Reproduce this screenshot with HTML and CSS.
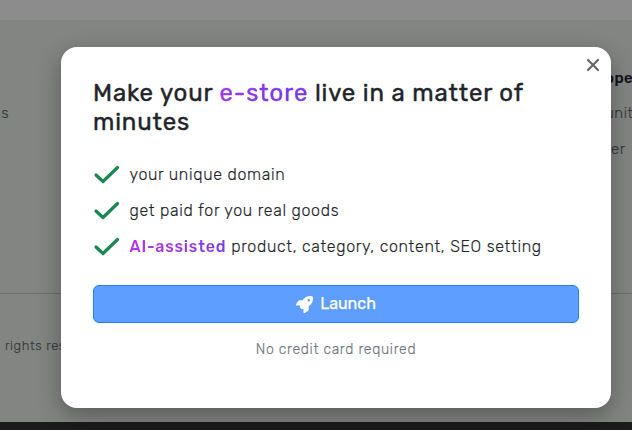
FILE: index.html
```html
<!DOCTYPE html>
<html lang="en">
<head>
<meta charset="utf-8">
<title>Launch your e-store</title>
<link rel="stylesheet" href="styles.css">
</head>
<body>
<div class="page">
  <div class="top-band"></div>
  <section class="links">
    <div class="left-links"><span class="blue">n</span>s</div>
    <div class="right-links">
      <strong>oper</strong>
      <span>unity</span>
      <span class="indent">er</span>
    </div>
  </section>
  <footer class="footer">rights reserved</footer>
  <div class="bottom-bar"></div>
</div>
<div class="modal">
  <button class="close" aria-label="Close"><svg width="14" height="14" viewBox="0 0 14 14"><path d="M2 2L12 12M12 2L2 12"/></svg></button>
  <h1 class="title"><span class="line">Make your <span class="grad heading-grad">e-store</span> live in a matter of</span> <span class="line">minutes</span></h1>
  <ul class="features">
    <li><svg class="check" width="27" height="20" viewBox="0 0 27 20"><path d="M3 11L10 17.5L24.5 3.5"/></svg><span>your unique domain</span></li>
    <li><svg class="check" width="27" height="20" viewBox="0 0 27 20"><path d="M3 11L10 17.5L24.5 3.5"/></svg><span>get paid for you real goods</span></li>
    <li><svg class="check" width="27" height="20" viewBox="0 0 27 20"><path d="M3 11L10 17.5L24.5 3.5"/></svg><span><b class="grad">AI-assisted</b> product, category, content, SEO setting</span></li>
  </ul>
  <button class="launch"><svg width="17" height="17" viewBox="0 0 512 512"><path d="M156.6 384.9L125.7 354c-8.5-8.5-11.5-20.8-7.7-32.2c3-8.9 7-20.5 11.8-33.8L24 288c-8.6 0-16.6-4.6-20.9-12.1s-4.2-16.7 .2-24.1l52.5-88.5c13-21.9 36.5-35.3 61.9-35.3l82.3 0c2.4-4 4.8-7.7 7.2-11.3C289.1-4.1 411.1-8.1 483.9 5.3c11.6 2.1 20.6 11.2 22.8 22.8c13.4 72.9 9.3 194.8-111.4 276.7c-3.5 2.4-7.3 4.8-11.3 7.2v82.3c0 25.4-13.4 49-35.3 61.9l-88.5 52.5c-7.4 4.4-16.6 4.5-24.1 .2s-12.1-12.2-12.1-20.9V380.8c-14.1 4.9-26.4 8.9-35.7 11.9c-11.2 3.6-23.4 .5-31.8-7.8zM384 168a40 40 0 1 0 0-80 40 40 0 1 0 0 80z"/></svg><span>Launch</span></button>
  <p class="note">No credit card required</p>
</div>
</body>
</html>
```
FILE: styles.css
```css
* { box-sizing: border-box; }
body {
  margin: 0;
  font-family: Rubik, Roboto, sans-serif;
  color: #212529;
}
.page {
  width: 632px;
  height: 430px;
  overflow: hidden;
  display: flex;
  flex-direction: column;
  background: #838583;
  color: #34383c;
  font-size: 15px;
  font-weight: 300;
  -webkit-text-stroke: 0.15px;
}
.top-band { height: 20px; background: #8c8c8c; }
.links {
  height: 274px;
  padding-top: 49px;
  display: flex;
  justify-content: space-between;
  border-bottom: 1px solid #6c6e6d;
}
.left-links { width: 60px; margin-left: -8px; padding-top: 35px; line-height: 18px; letter-spacing: 0.5px; }
.blue { color: #24507f; }
.right-links {
  width: 27px;
  display: flex;
  flex-direction: column;
  gap: 17.4px;
  line-height: 18px;
  white-space: nowrap;
  letter-spacing: 0.5px;
}
.right-links strong { color: #111316; font-weight: 500; }
.indent { padding-left: 6px; }
.footer {
  flex: 1;
  padding: 43px 0 0 5px;
  font-size: 13px;
  line-height: 18px;
  letter-spacing: 0.6px;
}
.bottom-bar { height: 8px; background: #1b1b1b; }
.modal {
  position: absolute;
  left: 61px;
  top: 47px;
  width: 550px;
  height: 361px;
  padding: 32px;
  border-radius: 16px;
  background: #fff;
  box-shadow: 0 8px 24px rgba(0, 0, 0, 0.32);
}
.close {
  position: absolute;
  top: 11px;
  right: 11px;
  padding: 0;
  border: 0;
  background: none;
  line-height: 0;
}
.close path { fill: none; stroke: #666; stroke-width: 2.2; stroke-linecap: round; }
.title {
  margin: 0;
  font-size: 24px;
  font-weight: 400;
  line-height: 29px;
  letter-spacing: 0.83px;
  -webkit-text-stroke: 0.4px;
}
.line { display: block; white-space: nowrap; }
.grad {
  background: linear-gradient(90deg, #b832e6, #7c3aed);
  -webkit-background-clip: text;
  background-clip: text;
  color: transparent;
}
.features b { font-weight: 500; -webkit-text-stroke: 0; letter-spacing: 0.8px; }
.heading-grad { background-image: linear-gradient(90deg, #9b36ea, #7038eb); }
.features {
  list-style: none;
  margin: 19px 0 0;
  padding: 0;
}
.features li {
  height: 36px;
  display: flex;
  align-items: center;
  gap: 9.5px;
  font-size: 16px;
  font-weight: 300;
  letter-spacing: 0.69px;
  white-space: nowrap;
  color: #212529;
  -webkit-text-stroke: 0.15px;
}
.check { flex: none; }
.check path {
  fill: none;
  stroke: #198754;
  stroke-width: 3.2;
  stroke-linecap: round;
  stroke-linejoin: round;
}
.launch {
  width: 100%;
  height: 38px;
  margin-top: 21px;
  padding: 0;
  display: flex;
  align-items: center;
  justify-content: center;
  gap: 7px;
  border: 1px solid #267cfb;
  border-radius: 6px;
  background: #5e9eff;
  color: #fff;
  font: 400 16px/20px Rubik, Roboto, sans-serif;
  -webkit-text-stroke: 0.25px;
}
.launch svg { fill: #fff; }
.note {
  margin: 17px 0 0;
  text-align: center;
  font-size: 14px;
  font-weight: 300;
  line-height: 20px;
  letter-spacing: 0.7px;
  color: #6c757d;
  -webkit-text-stroke: 0.15px;
}
```
